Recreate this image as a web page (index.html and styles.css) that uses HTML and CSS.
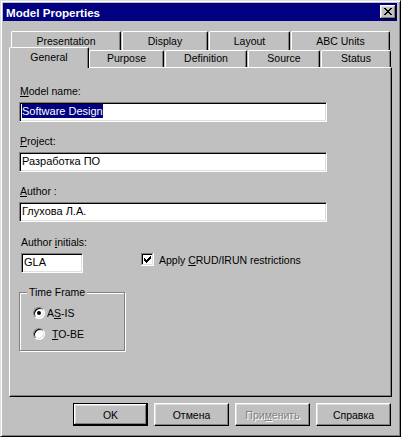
FILE: index.html
```html
<!DOCTYPE html>
<html>
<head>
<meta charset="utf-8">
<title>Model Properties</title>
<link rel="stylesheet" href="styles.css">
</head>
<body>
<div class="window">
  <div class="titlebar">
    <span class="title">Model Properties</span>
    <svg class="close" width="16" height="14" viewBox="0 0 16 14" shape-rendering="crispEdges">
      <rect x="0" y="0" width="16" height="14" fill="#000"/>
      <rect x="0" y="0" width="15" height="13" fill="#fff"/>
      <rect x="1" y="1" width="14" height="12" fill="#808080"/>
      <rect x="1" y="1" width="13" height="11" fill="#dfdfdf"/>
      <rect x="2" y="2" width="12" height="10" fill="#c0c0c0"/>
      <g fill="#000">
        <rect x="4" y="3" width="2" height="1"/><rect x="10" y="3" width="2" height="1"/>
        <rect x="5" y="4" width="2" height="1"/><rect x="9" y="4" width="2" height="1"/>
        <rect x="6" y="5" width="4" height="1"/>
        <rect x="7" y="6" width="2" height="1"/>
        <rect x="6" y="7" width="4" height="1"/>
        <rect x="5" y="8" width="2" height="1"/><rect x="9" y="8" width="2" height="1"/>
        <rect x="4" y="9" width="2" height="1"/><rect x="10" y="9" width="2" height="1"/>
      </g>
    </svg>
  </div>

  <div class="tabs">
    <div class="tabrow back">
      <div class="tab t-pres">Presentation</div>
      <div class="tab t-disp">Display</div>
      <div class="tab t-lay">Layout</div>
      <div class="tab t-abc">ABC Units</div>
    </div>
    <div class="tabrow front">
      <div class="tab active t-gen">General</div>
      <div class="tab t-pur">Purpose</div>
      <div class="tab t-def">Definition</div>
      <div class="tab t-src">Source</div>
      <div class="tab t-sta">Status</div>
    </div>
  </div>

  <div class="panel">
    <div class="lbl"><u>M</u>odel name:</div>
    <div class="field"><span class="sel">Software Design</span></div>

    <div class="lbl"><u>P</u>roject:</div>
    <div class="field">Разработка ПО</div>

    <div class="lbl"><u>A</u>uthor :</div>
    <div class="field">Глухова Л.А.</div>

    <div class="row">
      <div class="initials">
        <div class="lbl">Author <u>i</u>nitials:</div>
        <div class="field short">GLA</div>
      </div>
      <div class="check">
        <svg class="box" width="13" height="13" viewBox="0 0 13 13" shape-rendering="crispEdges">
          <rect x="0" y="0" width="13" height="13" fill="#fff"/>
          <rect x="0" y="0" width="12" height="12" fill="#dfdfdf"/>
          <rect x="0" y="0" width="12" height="1" fill="#808080"/>
          <rect x="0" y="0" width="1" height="12" fill="#808080"/>
          <rect x="1" y="1" width="10" height="1" fill="#000"/>
          <rect x="1" y="1" width="1" height="10" fill="#000"/>
          <rect x="2" y="2" width="9" height="9" fill="#fff"/>
          <g fill="#000">
            <rect x="3" y="5" width="1" height="3"/>
            <rect x="4" y="6" width="1" height="3"/>
            <rect x="5" y="7" width="1" height="3"/>
            <rect x="6" y="6" width="1" height="3"/>
            <rect x="7" y="5" width="1" height="3"/>
            <rect x="8" y="4" width="1" height="3"/>
            <rect x="9" y="3" width="1" height="3"/>
          </g>
        </svg>
        <span class="check-text">Apply <u>C</u>RUD/IRUN restrictions</span>
      </div>
    </div>

    <fieldset class="group">
      <legend>Time Frame</legend>
      <div class="opt"><span class="radio on"></span><span>A<u>S</u>-IS</span></div>
      <div class="opt"><span class="radio"></span><span class="tobe"><u>T</u>O-BE</span></div>
    </fieldset>
  </div>

  <div class="buttons">
    <div class="btn default">OK</div>
    <div class="btn">Отмена</div>
    <div class="btn disabled">При<u>м</u>енить</div>
    <div class="btn">Справка</div>
  </div>
</div>
</body>
</html>
```

FILE: styles.css
```css
html, body {
  margin: 0;
  padding: 0;
  background: #c0c0c0;
}
body {
  font-family: "Liberation Sans", Arial, sans-serif;
  font-size: 10.5px;
  color: #000;
}
.window {
  width: 401px;
  height: 437px;
  box-sizing: border-box;
  background: #c0c0c0;
  border: 1px solid;
  border-color: #dfdfdf #000 #000 #dfdfdf;
  box-shadow: inset 1px 1px #fff, inset -1px -1px #808080;
  padding: 2px 3px 2px 2px;
}
.titlebar {
  height: 18px;
  background: #000080;
  display: flex;
  align-items: center;
  justify-content: space-between;
  padding: 0 1px 0 3px;
}
.title {
  color: #fff;
  font-weight: bold;
  font-size: 11.6px;
}
.close {
  display: block;
}

/* tabs */
.tabs {
  margin-top: 10px;
  height: 36px;
}
.tabrow {
  display: flex;
  gap: 1px;
}
.tabrow.back {
  margin-left: 8px;
  height: 19px;
}
.tabrow.front {
  margin-left: 6px;
  margin-top: -3px;
  height: 20px;
  align-items: flex-end;
}
.tab {
  box-sizing: border-box;
  background: #c0c0c0;
  border: 1px solid #fff;
  border-right-color: #000;
  border-bottom: none;
  border-radius: 2px 2px 0 0;
  box-shadow: inset -1px 0 #808080;
  text-align: center;
  line-height: 13px;
  white-space: nowrap;
}
.back .tab {
  height: 19px;
  padding-top: 3px;
}
.front .tab {
  height: 17px;
  padding-top: 1px;
}
.front .tab.active {
  height: 21px;
  margin-bottom: -1px;
  margin-right: -1px;
  padding-top: 3px;
  position: relative;
  z-index: 1;
}
.t-pres { width: 110px; }
.t-disp { width: 86px; }
.t-lay { width: 81px; }
.t-abc { width: 99px; }
.t-gen { width: 80px; }
.t-pur { width: 75px; }
.t-def { width: 82px; }
.t-src { width: 72px; }
.t-sta { width: 70px; }

/* panel */
.panel {
  margin-left: 6px;
  width: 383px;
  height: 330px;
  box-sizing: border-box;
  border: 1px solid;
  border-color: #fff #000 #000 #fff;
  box-shadow: inset -1px -1px #808080;
  padding: 17px 0 0 9px;
}
.lbl {
  height: 13px;
  line-height: 13px;
  margin-bottom: 4px;
  padding-left: 1px;
  white-space: nowrap;
}
.field {
  width: 308px;
  height: 20px;
  box-sizing: border-box;
  background: #fff;
  border: 1px solid;
  border-color: #808080 #fff #fff #808080;
  box-shadow: inset 1px 1px #000, inset -1px -1px #dfdfdf;
  padding: 1px 0 0 2px;
  line-height: 14px;
  font-size: 11px;
  white-space: nowrap;
  overflow: hidden;
}
.field + .lbl {
  margin-top: 13px;
}
.sel {
  display: inline-block;
  height: 14px;
  background: #000080;
  color: #fff;
}
.row {
  display: flex;
  align-items: flex-start;
  margin-top: 14px;
}
.initials {
  margin-left: 2px;
  width: 62px;
}
.initials .lbl {
  padding-left: 0;
}
.field.short {
  width: 62px;
}
.check {
  display: flex;
  align-items: flex-start;
  gap: 5px;
  margin-left: 58px;
  margin-top: 17px;
}
.box {
  display: block;
}
.check-text {
  line-height: 13px;
  margin-top: 1px;
  white-space: nowrap;
}

/* group box */
.group {
  margin: 13px 0 0 0;
  width: 106px;
  min-width: 0;
  box-sizing: border-box;
  border: 1px solid #808080;
  box-shadow: inset 1px 1px #fff, 1px 1px #fff;
  padding: 3px 0 6px 13px;
}
.group legend {
  margin-left: -6px;
  padding: 0 2px;
  line-height: 13px;
  background: #c0c0c0;
}
.opt {
  display: flex;
  align-items: center;
  height: 21px;
  gap: 2px;
  white-space: nowrap;
}
.radio {
  width: 12px;
  height: 12px;
  box-sizing: border-box;
  border-radius: 50%;
  background: #fff;
  border: 1px solid;
  border-color: #808080 #fff #fff #808080;
  box-shadow: inset 1px 1px #000, inset -1px -1px #dfdfdf;
  display: flex;
  align-items: center;
  justify-content: center;
}
.radio.on::after {
  content: "";
  width: 4px;
  height: 4px;
  border-radius: 50%;
  background: #000;
}
.tobe {
  padding-left: 5px;
}

/* buttons */
.buttons {
  display: flex;
  justify-content: flex-end;
  gap: 6px;
  margin-top: 6px;
  padding-right: 6px;
}
.btn {
  width: 75px;
  height: 23px;
  box-sizing: border-box;
  border: 1px solid;
  border-color: #fff #000 #000 #fff;
  box-shadow: inset -1px -1px #808080, inset 1px 1px #dfdfdf;
  display: flex;
  align-items: center;
  justify-content: center;
  white-space: nowrap;
}
.btn.default {
  border-color: #000;
  box-shadow: inset -1px -1px #000, inset 1px 1px #fff, inset -2px -2px #808080, inset 2px 2px #dfdfdf;
}
.btn.disabled {
  color: #808080;
  text-shadow: 1px 1px #fff;
}
```
